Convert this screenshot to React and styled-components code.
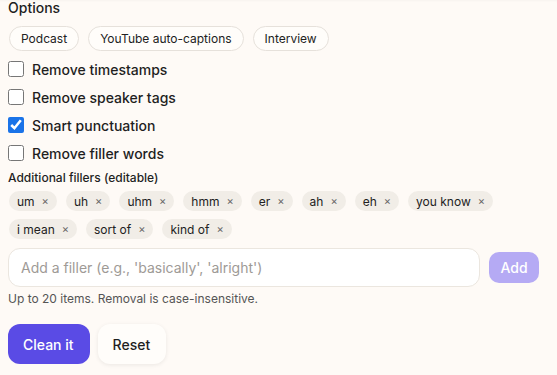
import React, { useState } from "react";
import styled, { createGlobalStyle } from "styled-components";

const GlobalStyle = createGlobalStyle`
  html, body {
    margin: 0;
    background: #fefaf6;
    font-family: Inter, "Noto Sans", sans-serif;
    color: #1f1f1f;
  }
`;

const Wrap = styled.div`
  padding: 0 8px 0 8px;
  box-shadow: inset 0 3px 3px -2px rgba(0, 0, 0, 0.06);
  min-height: 375px;
  box-sizing: border-box;
`;

const Title = styled.div`
  font-size: 14px;
  font-weight: 500;
  line-height: 18px;
  margin-top: -1px;
`;

const PresetRow = styled.div`
  display: flex;
  gap: 9px;
  margin-top: 9px;
  padding-left: 1px;
`;

const Preset = styled.button`
  font-family: inherit;
  font-size: 12px;
  color: #222;
  background: #fffdfa;
  border: 1px solid #e6e1db;
  border-radius: 999px;
  height: 25px;
  padding: 0 11px;
  cursor: pointer;
`;

const CheckList = styled.div`
  display: flex;
  flex-direction: column;
  gap: 8px;
  margin-top: 8px;
`;

const CheckRow = styled.label`
  display: flex;
  align-items: center;
  gap: 8px;
  font-size: 14px;
  font-weight: 500;
  height: 20px;
  cursor: pointer;

  input {
    width: 16px;
    height: 16px;
    margin: 0;
    accent-color: #1a73e8;
  }
`;

const Label = styled.div`
  font-size: 12px;
  font-weight: 500;
  margin-top: 7px;
  line-height: 15px;
`;

const Tags = styled.div`
  display: flex;
  flex-wrap: wrap;
  gap: 8px 9px;
  margin-top: 6px;
  padding-left: 1px;
  max-width: 500px;
`;

const Tag = styled.span`
  display: inline-flex;
  align-items: center;
  gap: 7px;
  height: 20px;
  padding: 0 8px;
  border-radius: 999px;
  background: #f1ede7;
  font-size: 12px;
  color: #222;
`;

const TagX = styled.button`
  border: 0;
  background: none;
  padding: 0;
  font-family: inherit;
  font-size: 11px;
  color: #666;
  cursor: pointer;
  line-height: 1;
`;

const InputRow = styled.div`
  display: flex;
  align-items: center;
  gap: 9px;
  margin-top: 9px;
`;

const FillerInput = styled.input`
  width: 472px;
  height: 39px;
  box-sizing: border-box;
  border: 1px solid #ebe6df;
  border-radius: 12px;
  background: #fff;
  padding: 0 12px;
  font-family: inherit;
  font-size: 14px;
  outline: none;

  &::placeholder {
    color: #9e9a96;
  }
`;

const AddButton = styled.button`
  width: 50px;
  height: 31px;
  border: 0;
  border-radius: 10px;
  background: #b5aaf4;
  color: #fff;
  font-family: inherit;
  font-size: 14px;
  font-weight: 500;
`;

const Help = styled.div`
  font-size: 12px;
  color: #555;
  margin-top: 4px;
  line-height: 15px;
`;

const Actions = styled.div`
  display: flex;
  gap: 8px;
  margin-top: 18px;
`;

const ActionButton = styled.button`
  height: 40px;
  padding: 0 16px 0 15px;
  border-radius: 12px;
  font-family: inherit;
  font-size: 14px;
  font-weight: 500;
  cursor: pointer;
  border: 0;
  background: ${(p) => (p.$primary ? "#5a4be5" : "#fffdfa")};
  color: ${(p) => (p.$primary ? "#fff" : "#1f1f1f")};
  box-shadow: ${(p) =>
    p.$primary ? "none" : "0 1px 4px rgba(0,0,0,0.08)"};
`;

const presets = ["Podcast", "YouTube auto-captions", "Interview"];
const options = [
  ["Remove timestamps", false],
  ["Remove speaker tags", false],
  ["Smart punctuation", true],
  ["Remove filler words", false],
];
const initialFillers = ["um", "uh", "uhm", "hmm", "er", "ah", "eh", "you know", "i mean", "sort of", "kind of"];

export default function App() {
  const [checks, setChecks] = useState(options.map((o) => o[1]));
  const [fillers, setFillers] = useState(initialFillers);

  return (
    <>
      <GlobalStyle />
      <Wrap>
        <Title>Options</Title>
        <PresetRow>
          {presets.map((p) => (
            <Preset key={p}>{p}</Preset>
          ))}
        </PresetRow>
        <CheckList>
          {options.map(([label], i) => (
            <CheckRow key={label}>
              <input
                type="checkbox"
                checked={checks[i]}
                onChange={() => setChecks(checks.map((c, j) => (j === i ? !c : c)))}
              />
              {label}
            </CheckRow>
          ))}
        </CheckList>
        <Label>Additional fillers (editable)</Label>
        <Tags>
          {fillers.map((f) => (
            <Tag key={f}>
              {f}
              <TagX onClick={() => setFillers(fillers.filter((x) => x !== f))}>×</TagX>
            </Tag>
          ))}
        </Tags>
        <InputRow>
          <FillerInput placeholder="Add a filler (e.g., 'basically', 'alright')" />
          <AddButton disabled>Add</AddButton>
        </InputRow>
        <Help>Up to 20 items. Removal is case-insensitive.</Help>
        <Actions>
          <ActionButton $primary>Clean it</ActionButton>
          <ActionButton>Reset</ActionButton>
        </Actions>
      </Wrap>
    </>
  );
}
